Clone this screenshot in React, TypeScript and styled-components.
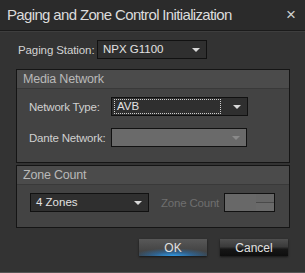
import React from 'react';
import styled, { createGlobalStyle } from 'styled-components';

const GlobalStyle = createGlobalStyle`
    html, body {
        margin: 0;
        padding: 0;
        background: #333333;
    }
    * {
        box-sizing: border-box;
    }
`;

interface IDropdownProps {
    value?: string;
    width: number;
    disabled?: boolean;
    focused?: boolean;
}

const Dropdown: React.FunctionComponent<IDropdownProps> = ({
    value,
    width,
    disabled,
    focused,
}) => {
    return (
        <SelectBox $width={width} $disabled={disabled}>
            <SelectValue $focused={focused}>{value}</SelectValue>
            <Arrow $disabled={disabled} />
        </SelectBox>
    );
};

const App: React.FunctionComponent = () => {
    return (
        <Window>
            <GlobalStyle />
            <TitleBar>
                <Title>Paging and Zone Control Initialization</Title>
                <Close>×</Close>
            </TitleBar>
            <Body>
                <StationRow>
                    <Label>Paging Station:</Label>
                    <Dropdown value="NPX G1100" width={110} />
                </StationRow>

                <Group>
                    <GroupHeader>Media Network</GroupHeader>
                    <GroupBody>
                        <FieldRow>
                            <FieldLabel>Network Type:</FieldLabel>
                            <Dropdown value="AVB" width={137} focused />
                        </FieldRow>
                        <FieldRow>
                            <FieldLabel>Dante Network:</FieldLabel>
                            <Dropdown width={136} disabled />
                        </FieldRow>
                    </GroupBody>
                </Group>

                <Group>
                    <GroupHeader>Zone Count</GroupHeader>
                    <GroupBody>
                        <ZoneRow>
                            <Dropdown value="4 Zones" width={119} />
                            <DimLabel>Zone Count</DimLabel>
                            <CountInput />
                        </ZoneRow>
                    </GroupBody>
                </Group>

                <Buttons>
                    <Button $primary>OK</Button>
                    <Button>Cancel</Button>
                </Buttons>
            </Body>
        </Window>
    );
};

export default App;

const Window = styled.div`
    width: 305px;
    height: 273px;
    background-color: #333333;
    border-bottom: 1px solid #555555;
    font-family: 'Liberation Sans', Arial, sans-serif;
    display: flex;
    flex-direction: column;
`;

const TitleBar = styled.div`
    height: 31px;
    display: flex;
    align-items: center;
    justify-content: space-between;
    padding: 0 9px 2px 7px;
    background-color: #2b2b2b;
    border-bottom: 1px solid #1b1b1b;
    box-shadow: 0 1px 0 #3e3e3e;
`;

const Title = styled.div`
    color: #dcdcdc;
    font-size: 15px;
    letter-spacing: -0.65px;
`;

const Close = styled.div`
    color: #cfcfcf;
    font-size: 17px;
    line-height: 1;
`;

const Body = styled.div`
    padding: 9px 15px 0 16px;
    display: flex;
    flex-direction: column;
`;

const StationRow = styled.div`
    display: flex;
    align-items: center;
    padding-left: 2px;
    margin-bottom: 10px;
`;

const Label = styled.span`
    color: #d2d2d2;
    font-size: 11.5px;
    letter-spacing: -0.1px;
    width: 79px;
`;

const SelectBox = styled.div<{ $width: number; $disabled?: boolean }>`
    width: ${(p) => p.$width}px;
    height: 19px;
    display: flex;
    align-items: center;
    padding: 0 6px 0 2px;
    border: 1px solid #111111;
    background-color: ${(p) => (p.$disabled ? '#6a6a6a' : '#2f2f2f')};
`;

const SelectValue = styled.span<{ $focused?: boolean }>`
    flex: 1;
    height: 15px;
    line-height: 13px;
    padding-left: 2px;
    margin-right: 12px;
    color: #e2e2e2;
    font-size: 11.5px;
    border: 1px dotted ${(p) => (p.$focused ? '#cfcfcf' : 'transparent')};
`;

const Arrow = styled.span<{ $disabled?: boolean }>`
    width: 0;
    height: 0;
    border-left: 4px solid transparent;
    border-right: 4px solid transparent;
    border-top: 4px solid ${(p) => (p.$disabled ? '#8a8a8a' : '#d8d8d8')};
`;

const Group = styled.div`
    border: 1px solid #151515;
    background-color: #434343;
    margin-bottom: 2px;
`;

const GroupHeader = styled.div`
    height: 19px;
    line-height: 18px;
    padding-left: 6px;
    background-color: #4b4b4b;
    border-bottom: 1px solid #393939;
    color: #b9b9b9;
    font-size: 12.5px;
    letter-spacing: -0.2px;
`;

const GroupBody = styled.div`
    padding: 8px 0 15px 12px;
    display: flex;
    flex-direction: column;
    gap: 12px;
`;

const FieldRow = styled.div`
    display: flex;
    align-items: center;
`;

const FieldLabel = styled.span`
    color: #d0d0d0;
    font-size: 11.5px;
    letter-spacing: -0.2px;
    width: 82px;
`;

const ZoneRow = styled.div`
    display: flex;
    align-items: center;
    padding-left: 1px;
`;

const DimLabel = styled.span`
    color: #6f6f6f;
    font-size: 11.5px;
    letter-spacing: -0.2px;
    margin-left: 12px;
    width: 63px;
`;

const CountInput = styled.div`
    width: 51px;
    height: 19px;
    border: 1px solid #111111;
    background: linear-gradient(
        to bottom,
        #666666 0,
        #666666 8px,
        #4a4a4a 8px,
        #4a4a4a 9px,
        #6a6a6a 9px
    );
    background-size: 18px 100%;
    background-repeat: no-repeat;
    background-position: right;
    background-color: #686868;
`;

const Buttons = styled.div`
    display: flex;
    justify-content: flex-end;
    gap: 13px;
    margin-top: 9px;
    padding-right: 2px;
`;

const Button = styled.div<{ $primary?: boolean }>`
    width: 68px;
    height: 17px;
    display: flex;
    align-items: center;
    justify-content: center;
    font-size: 12px;
    color: #e0e0e0;
    box-shadow: 0 1px 2px rgba(0, 0, 0, 0.6);
    background: ${(p) =>
        p.$primary
            ? 'radial-gradient(ellipse 60% 45% at 50% 100%, #2f9be8 0%, rgba(40,120,190,0.6) 50%, rgba(60,60,60,0) 100%), linear-gradient(to bottom, #585858, #3c3c3c)'
            : 'linear-gradient(to bottom, #4f4f4f 0%, #3a3a3a 45%, #161616 60%, #0e0e0e 100%)'};
`;
